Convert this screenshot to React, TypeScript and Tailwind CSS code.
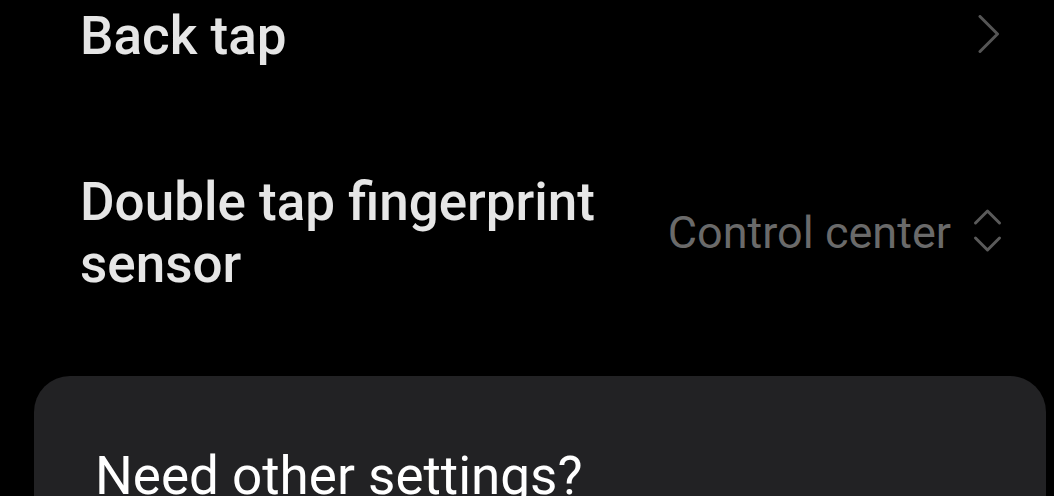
import React from "react";

export default function App() {
  return (
    <div className="w-[1054px] h-[496px] bg-black overflow-hidden" style={{ fontFamily: "Roboto, 'Noto Sans', sans-serif" }}>
      <div className="flex items-start justify-between pl-[80px] pr-[54px] pt-[6px] h-[72px]">
        <div className="text-[53px] font-medium text-[#e6e6e6] leading-[60px]">Back tap</div>
        <svg width="22" height="38" viewBox="0 0 22 38" className="mt-[9px]">
          <path d="M2 1.5 L19.5 19 L2 36.5" fill="none" stroke="#555555" strokeWidth="3" strokeLinecap="round" strokeLinejoin="round" />
        </svg>
      </div>
      <div className="flex items-center justify-between pl-[80px] pr-[52px] mt-[99px]">
        <div className="text-[53px] font-medium text-[#e6e6e6] leading-[62px] w-[580px]">Double tap fingerprint sensor</div>
        <div className="flex items-center gap-[22px]">
          <span className="text-[45px] text-[#6a6a6a] leading-[56px]">Control center</span>
          <svg width="29" height="45" viewBox="0 0 29 45" className="mb-[5px]">
            <path d="M2.5 15 L14.5 3 L26.5 15" fill="none" stroke="#5a5a5a" strokeWidth="3" strokeLinecap="round" strokeLinejoin="round" />
            <path d="M2.5 30 L14.5 42 L26.5 30" fill="none" stroke="#5a5a5a" strokeWidth="3" strokeLinecap="round" strokeLinejoin="round" />
          </svg>
        </div>
      </div>
      <div className="ml-[34px] mr-[8px] mt-[81px] h-[200px] rounded-[36px] bg-[#222224] pl-[61px] pt-[70px]">
        <div className="text-[53px] text-white leading-[60px] whitespace-nowrap">Need other settings?</div>
      </div>
    </div>
  );
}
